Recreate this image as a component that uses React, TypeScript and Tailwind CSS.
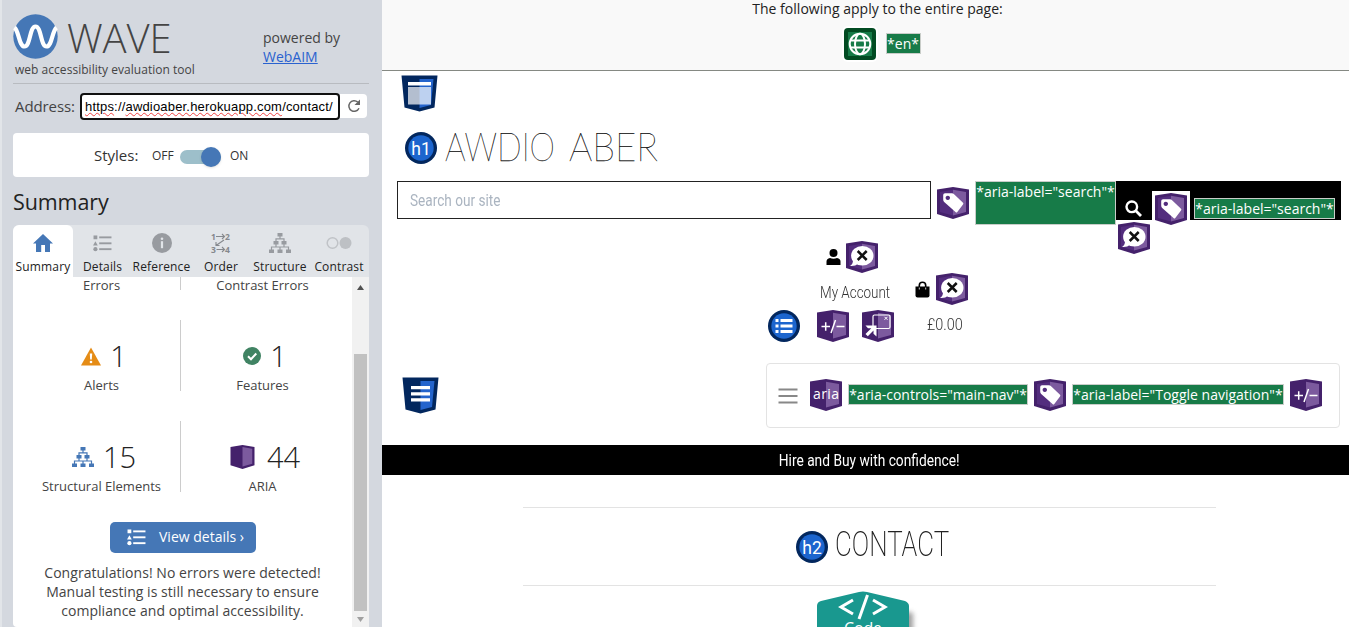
import React from "react";

const OPEN = "font-['Open_Sans','Noto_Sans',sans-serif]";
const NARROW = "font-['Roboto','Open_Sans',sans-serif]";

type IconProps = { className?: string };

function WaveLogo() {
  return (
    <svg className="h-[45px] w-[45px] shrink-0" viewBox="0 0 45 45">
      <circle cx="22.500" cy="22.500" r="22.200" fill="#4577b6" />
      <path d="M1.500 13.500 C6 17 6 32.500 11.500 32.500 C17.500 32.500 16.500 12.500 22.500 12.500 C28.500 12.500 27.500 32.500 33.500 32.500 C39 32.500 39 17 43.500 13.500" fill="none" stroke="#fff" strokeWidth="4.200" />
    </svg>
  );
}

function ListIcon({ className }: IconProps) {
  return (
    <svg className={className} viewBox="0 0 20 18" fill="currentColor">
      <rect x="0.500" y="0.500" width="4" height="4" />
      <path d="M2.500 6.500 L5 11 H0z" />
      <circle cx="2.500" cy="15" r="2.200" />
      <rect x="6.500" y="1.500" width="13" height="2" />
      <rect x="6.500" y="7.800" width="13" height="2" />
      <rect x="6.500" y="14" width="13" height="2" />
    </svg>
  );
}

function TreeIcon({ className }: IconProps) {
  return (
    <svg className={className} viewBox="0 0 22 20" fill="currentColor">
      <rect x="8.500" y="0" width="5" height="3.500" />
      <rect x="4.500" y="8" width="5" height="3.500" />
      <rect x="12.500" y="8" width="5" height="3.500" />
      <rect x="0" y="16.500" width="5" height="3.500" />
      <rect x="8.500" y="16.500" width="5" height="3.500" />
      <rect x="17" y="16.500" width="5" height="3.500" />
      <path d="M11 3v3M7 8V5.800h8V8M7 11v2.500M15 11v2.500M2.500 17v-3h17v3M11 14v3" fill="none" stroke="currentColor" strokeWidth="1.200" />
    </svg>
  );
}

function HomeIcon() {
  return (
    <svg className="h-[18px] w-[20px]" viewBox="0 0 20 18" fill="#4577b6">
      <path d="M10 0 L20 9.500 H17 V18 H12 V11 H8.200 V18 H3 V9.500 H0z" />
    </svg>
  );
}

function InfoIcon() {
  return (
    <svg className="h-[20px] w-[20px]" viewBox="0 0 20 20">
      <circle cx="10" cy="10" r="10" fill="#989ba0" />
      <circle cx="10" cy="5.700" r="1.300" fill="#e1e4e8" />
      <rect x="8.900" y="8.200" width="2.200" height="7" fill="#e1e4e8" />
    </svg>
  );
}

function OrderIcon() {
  return (
    <svg className="h-[22px] w-[20px] overflow-visible" viewBox="0 0 20 22" fill="#85888d" fontFamily="Open Sans" fontWeight="700" fontSize="8.500">
      <text x="0" y="7.500">1</text>
      <text x="14" y="7.500">2</text>
      <text x="0" y="20.500">3</text>
      <text x="14" y="20.500">4</text>
      <path d="M5 4.500h8.500M11 2L13.500 4.500 11 7M5.500 17.500h8M11 15l2.500 2.500-2.500 2.500M13 8L5 13.500M5 10V13.500h3.500" fill="none" stroke="#85888d" strokeWidth="1.100" />
    </svg>
  );
}

function ContrastIcon() {
  return (
    <svg className="h-[14px] w-[26px]" viewBox="0 0 26 14">
      <circle cx="6.500" cy="7" r="5.300" fill="none" stroke="#c0c3c7" strokeWidth="1.500" />
      <circle cx="19.500" cy="7" r="6" fill="#bdc0c4" />
    </svg>
  );
}

function AlertIcon() {
  return (
    <svg className="h-[19px] w-[20px]" viewBox="0 0 20 19">
      <path d="M10 0.500 L20 18.500 H0z" fill="#e58c16" />
      <path d="M8.800 6.500h2.400l-.4 6H9.200z" fill="#fff" />
      <circle cx="10" cy="15" r="1.300" fill="#fff" />
    </svg>
  );
}

function CheckIcon() {
  return (
    <svg className="h-[18px] w-[18px]" viewBox="0 0 18 18">
      <circle cx="9" cy="9" r="9" fill="#408363" />
      <path d="M5 9.200l3 3 5.300-5.700" fill="none" stroke="#fff" strokeWidth="2" />
    </svg>
  );
}

function Hex({ children, className = "h-8 w-8" }: { children?: React.ReactNode; className?: string }) {
  return (
    <svg className={`shrink-0 ${className}`} viewBox="0 0 32 32">
      <path d="M0 2.600 L16 0 L32 2.600 V27 L16 32 L0 27z" fill="#44216b" />
      <path d="M16 2.800 L29 5 V25 L16 28.600z" fill="#7c5a9e" />
      {children}
    </svg>
  );
}

function HexTag({ className }: IconProps) {
  return (
    <Hex className={className}>
      <path d="M3 5 L16 2.800 V28.600 L3 25z" fill="#532d7e" />
      <path fillRule="evenodd" fill="#fff" d="M8 6.200 H15 Q16 6.200 16.800 7 L26 15.800 Q26.800 16.600 26 17.500 L20.300 25 Q19.500 26 18.500 25 L7.200 15 Q6.200 14 6.200 12.500 V8 Q6.200 6.200 8 6.200z M10.800 8.700 a2.200 2.200 0 1 0 .01 0z" />
    </Hex>
  );
}

function HexHidden({ className }: IconProps) {
  return (
    <Hex className={className}>
      <path d="M3 5 L16 2.800 V28.600 L3 25z" fill="#532d7e" />
      <ellipse cx="16.300" cy="14.800" rx="11.200" ry="9.800" fill="#fff" />
      <path d="M7 18 Q7.500 23 4 25 Q9 25.500 12.500 22.500z" fill="#fff" />
      <path d="M11.700 10l9 9M20.700 10l-9 9" stroke="#111" strokeWidth="2.500" />
    </Hex>
  );
}

function HexPlus() {
  return (
    <Hex>
      <path d="M4.500 16.500h8.500M8.700 12.200v8.500M19.500 16.500h8M18.500 10L14 23" stroke="#fff" strokeWidth="1.500" fill="none" />
    </Hex>
  );
}

function HexPopup() {
  return (
    <Hex>
      <rect x="11" y="5" width="17" height="13.500" rx="1.500" fill="none" stroke="#fff" strokeWidth="1.200" />
      <path d="M22.500 6.800l3 3M25.500 6.800l-3 3" stroke="#fff" strokeWidth="1" />
      <path d="M3.500 15.500H14.500V26.500L11.500 23.800V20.500L5.800 26.200 L3.500 24 L9.300 18.300H6z" fill="#fff" />
    </Hex>
  );
}

function HexAria() {
  return (
    <Hex>
      <text x="3" y="20" fontFamily="Open Sans" fontSize="14" fill="#fff" textLength="26">aria</text>
    </Hex>
  );
}

function Shield({ kind }: { kind: "header" | "nav" }) {
  return (
    <svg className="h-[37px] w-[37px]" viewBox="0 0 37 37">
      <path d="M0.500 0.500 H36.500 L33.500 32.500 L18.500 36.500 L3.500 32.500z" fill="#02275e" />
      <path d="M18.500 4 H32.500 L30 30 L18.500 33z" fill="#2464cc" />
      {kind === "header" ? (
        <>
          <rect x="7" y="7" width="23" height="3.500" fill="#fff" />
          <rect x="7" y="12" width="23" height="17.500" fill="#fff" fillOpacity="0.700" />
        </>
      ) : (
        <path d="M9 9h19v3.300H9zM9 15.200h19v3.300H9zM9 21.300h19v3.300H9z" fill="#fff" />
      )}
    </svg>
  );
}

function Round({ label }: { label?: string }) {
  return (
    <svg className="h-8 w-8 shrink-0" viewBox="0 0 32 32">
      <circle cx="16" cy="16" r="16" fill="#02275e" />
      <circle cx="16" cy="16" r="12.700" fill="#1c65ce" />
      {label ? (
        <text x="16" y="22.500" textAnchor="middle" fontFamily="Roboto" fontSize="17.500" fill="#fff">{label}</text>
      ) : (
        <path d="M7.500 9h3v3h-3zM7.500 14.500h3v3h-3zM7.500 20h3v3h-3zM12.500 9h12v3h-12zM12.500 14.500h12v3h-12zM12.500 20h12v3h-12z" fill="#fff" />
      )}
    </svg>
  );
}

function GlobeIcon() {
  return (
    <svg className="h-8 w-8" viewBox="0 0 32 32">
      <rect width="32" height="32" rx="4" fill="#024b22" />
      <rect x="4" y="4" width="24" height="24" fill="#177b48" />
      <g fill="none" stroke="#fff" strokeWidth="2">
        <circle cx="16" cy="16" r="10.300" />
        <ellipse cx="16" cy="16" rx="5" ry="10.300" />
        <path d="M6.500 12.500h19M6.500 19.500h19" />
      </g>
    </svg>
  );
}

function Label({ text, className }: { text: string; className: string }) {
  return (
    <span className={`${OPEN} flex shrink-0 justify-center whitespace-nowrap border border-[#c9cdc9] bg-[#177b48] text-[14px] leading-[19px] text-white ${className}`}>
      {text}
    </span>
  );
}

function Tab({ label, icon, className, active }: { label: string; icon: React.ReactNode; className: string; active?: boolean }) {
  return (
    <div className={`flex flex-col items-center ${active ? "rounded-t-md bg-white" : ""} ${className}`}>
      <div className="mt-[6px] flex h-[24px] items-center">{icon}</div>
      <span className="mt-[3px] text-[12px] leading-[18px] tracking-[0.150px] text-[#222]">{label}</span>
    </div>
  );
}

function Stat({ icon, value, label, className }: { icon: React.ReactNode; value: string; label: string; className: string }) {
  return (
    <div className={`flex h-[71px] flex-col items-center ${className}`}>
      <div className="mt-[19px] ml-[5px] flex h-[34px] items-center gap-[9px]">
        {icon}
        <span className="text-[29px] font-light leading-[34px] text-[#222]">{value}</span>
      </div>
      <span className="mt-[3px] text-[13px] leading-[18px] text-[#444]">{label}</span>
    </div>
  );
}

function Sidebar() {
  return (
    <aside className={`${OPEN} flex h-[627px] w-[382px] shrink-0 flex-col border-l-2 border-[#e2e5e9] bg-[#d4d8df] pl-[11px] text-[#444]`}>
      <div className="flex h-[84px] w-[356px] border-b border-[#b8bbc0] pt-[14px]">
        <div className="flex w-[250px] flex-col">
          <div className="flex h-[48px]">
            <WaveLogo />
            <span className="ml-[9px] text-[40px] font-light leading-[48px] tracking-[-0.100px]">WAVE</span>
          </div>
          <span className="ml-[2px] text-[12px] leading-[16px] tracking-[0.030px]">web accessibility evaluation tool</span>
        </div>
        <div className="mt-[14px] text-[14px] leading-[19px]">
          powered by
          <br />
          <a className="text-[#2a62cf] underline" href="#">WebAIM</a>
        </div>
      </div>
      <div className="mt-[8px] flex h-[28px] items-center">
        <label className="ml-[2px] w-[65px] text-[15px] tracking-[-0.100px]">Address:</label>
        <div className="flex h-[27px] w-[260px] items-center rounded-[4px] border-2 border-[#101010] bg-white pl-[3px] font-['Liberation_Sans',sans-serif] text-[13px] text-black">
          <span className="mt-[2px] whitespace-nowrap leading-[16px] tracking-[0.180px]"><span className="underline decoration-[#e44] decoration-wavy decoration-[1px]">https</span>://<span className="underline decoration-[#e44] decoration-wavy decoration-[1px]">awdioaber.herokuapp.com</span>/contact/</span>
        </div>
        <div className="flex h-[24px] w-[27px] items-center justify-center rounded-r-[4px] bg-white">
          <svg className="h-[14px] w-[14px]" viewBox="0 0 14 14">
            <path d="M12 9.200A5.300 5.300 0 1 1 10.700 3" fill="none" stroke="#666" strokeWidth="1.500" />
            <path d="M13 0.500v5.500H7.500z" fill="#666" />
          </svg>
        </div>
      </div>
      <div className="mt-[13px] flex h-[44px] w-[356px] items-center rounded-[4px] bg-white pl-[81px] text-[#333]">
        <span className="mt-[1px] w-[58px] text-[15px]">Styles:</span>
        <span className="mt-[1px] w-[27px] text-[12px]">OFF</span>
        <div className="mt-[3px] ml-[1px] flex h-[14px] w-[41px] items-center justify-end rounded-full bg-[#9dbfca]">
          <span className="h-[20px] w-[20px] rounded-full bg-[#4577b6] shadow" />
        </div>
        <span className="mt-[1px] ml-[9px] text-[12px]">ON</span>
      </div>
      <h2 className="mt-[9px] h-[39px] text-[21.500px] leading-[32px] tracking-[-0.100px] text-[#222]">Summary</h2>
      <div className="flex h-[52px] w-[356px] rounded-t-[6px] bg-[#e1e4e8]">
        <Tab active label="Summary" className="w-[60px]" icon={<HomeIcon />} />
        <Tab label="Details" className="w-[59px]" icon={<ListIcon className="h-[17px] w-[19px] text-[#989ba0]" />} />
        <Tab label="Reference" className="w-[59px]" icon={<InfoIcon />} />
        <Tab label="Order" className="w-[60px]" icon={<OrderIcon />} />
        <Tab label="Structure" className="w-[58px]" icon={<TreeIcon className="h-[20px] w-[22px] text-[#989ba0]" />} />
        <Tab label="Contrast" className="w-[60px]" icon={<ContrastIcon />} />
      </div>
      <div className="flex h-[350px] w-[356px] overflow-hidden rounded-bl-[4px] bg-white">
        <div className="flex w-[339px] flex-col">
          <div className="flex h-[13px] text-[13px] leading-[16px]">
            <div className="w-[168px] border-r border-[#ccc] pl-[10px] text-center">Errors</div>
            <div className="w-[163px] text-center">Contrast Errors</div>
          </div>
          <div className="mt-[30px] flex">
            <Stat className="w-[168px] border-r border-[#ccc] pl-[10px]" icon={<AlertIcon />} value="1" label="Alerts" />
            <Stat className="w-[163px]" icon={<CheckIcon />} value="1" label="Features" />
          </div>
          <div className="mt-[30px] flex">
            <Stat className="w-[168px] border-r border-[#ccc] pl-[10px]" icon={<TreeIcon className="h-[20px] w-[22px] text-[#4577b6]" />} value="15" label="Structural Elements" />
            <Stat className="w-[163px]" icon={<Hex className="mr-[3px] h-[24px] w-[25px]" />} value="44" label="ARIA" />
          </div>
          <div className="mt-[30px] ml-[97px] flex h-[31px] w-[146px] items-center rounded-[5px] bg-[#4577b6] pl-[17px] text-[14px] text-white">
            <ListIcon className="h-[17px] w-[19px]" />
            <span className="-mt-[2px] ml-[13px] whitespace-nowrap">View details ›</span>
          </div>
          <p className="mt-[10px] text-center text-[14px] leading-[19.200px] tracking-[0.040px]">
            Congratulations! No errors were detected!
            <br />
            Manual testing is still necessary to ensure
            <br />
            compliance and optimal accessibility.
          </p>
        </div>
        <div className="flex w-[17px] flex-col items-center bg-[#f1f1f1]">
          <svg className="mt-[8px] h-[5px] w-[7px]" viewBox="0 0 7 5"><path d="M0 5L3.500 0 7 5z" fill="#505050" /></svg>
          <div className="mt-[64px] h-[257px] w-[13px] bg-[#c1c1c1]" />
          <svg className="mt-[6px] h-[5px] w-[7px]" viewBox="0 0 7 5"><path d="M0 0L3.500 5 7 0z" fill="#a0a0a0" /></svg>
        </div>
      </div>
    </aside>
  );
}

function PageInfo() {
  return (
    <div className={`${OPEN} flex h-[71px] flex-col items-center border-b border-[#858983] bg-[#f9f9f9] text-[#222]`}>
      <p className="ml-[24px] text-[14px] leading-[18px] tracking-[0.030px]">The following apply to the entire page:</p>
      <div className="mt-[8px] ml-[31px] flex h-[36px] items-center">
        <div className="rounded-[6px] border-2 border-white"><GlobeIcon /></div>
        <Label text="*en*" className="-mt-[2px] ml-[8px] h-[21px] w-[35px]" />
      </div>
    </div>
  );
}

export default function App() {
  return (
    <div className="flex h-[627px] w-[1349px] overflow-hidden bg-white">
      <Sidebar />
      <main className="flex w-[967px] flex-col">
        <PageInfo />
        <div className="mt-[4px] ml-[19px] h-[37px]"><Shield kind="header" /></div>
        <div className="mt-[14px] ml-[23px] flex h-[45px] items-center">
          <div className="-mt-[1px]"><Round label="h1" /></div>
          <svg className="ml-[8px] h-[46px] w-[220px] overflow-visible" viewBox="0 0 220 46">
            <text x="0" y="34.500" fontFamily="Lato, Roboto, sans-serif" fontWeight="100" fontSize="39" fill="#000" stroke="#000" strokeWidth="0.250" textLength="110" lengthAdjust="spacingAndGlyphs">AWDIO</text>
            <text x="124" y="34.500" fontFamily="Lato, Roboto, sans-serif" fontWeight="100" fontSize="39" fill="#000" stroke="#000" strokeWidth="0.250" textLength="89" lengthAdjust="spacingAndGlyphs">ABER</text>
          </svg>
        </div>
        <div className="mt-[10px] ml-[15px] flex h-[60px] items-start">
          <div className="flex h-[38px] w-[534px] items-center border border-[#222] pl-[12px]">
            <span className={`${NARROW} mt-[2px] inline-block origin-left scale-x-[0.850] text-[16px] text-[#aab4c0]`}>Search our site</span>
          </div>
          <div className="mt-[6px] ml-[6px] h-8"><HexTag /></div>
          <Label text={'*aria-label="search"*'} className="ml-[6px] h-[44px] w-[141px]" />
          <div className="flex h-[39px] w-[225px] items-start bg-black">
            <svg className="mt-[19px] ml-[9px] h-[17px] w-[17px] shrink-0" viewBox="0 0 17 17">
              <circle cx="6.800" cy="6.800" r="5.300" fill="none" stroke="#fff" strokeWidth="2.400" />
              <path d="M10.800 10.800L16 16" stroke="#fff" strokeWidth="2.800" />
            </svg>
            <div className="mt-[10px] ml-[10px] h-[34px] w-[38px] shrink-0 border-2 border-b-0 border-white bg-white pl-[1px]"><HexTag /></div>
            <Label text={'*aria-label="search"*'} className="mt-[17px] ml-[4px] h-[21px] w-[141px]" />
          </div>
        </div>
        <div className="-mt-[19px] ml-[736px] h-[32px]"><HexHidden /></div>
        <div className="-mt-[13px] ml-[386px] flex h-[103px]">
          <div className="flex w-[147px] flex-col">
            <div className="ml-[58px] flex h-[32px] items-center">
              <svg className="h-[16px] w-[15px]" viewBox="0 0 15 16"><circle cx="7.500" cy="4" r="4" /><path d="M0.500 16V12.500Q.5 9.500 4 9 Q7.500 10.500 11 9 Q14.500 9.500 14.500 12.500V16z" /></svg>
              <HexHidden className="ml-[5px] h-8 w-8" />
            </div>
            <span className={`${NARROW} mt-[9px] ml-[52px] w-[80px] origin-left scale-x-[0.840] whitespace-nowrap text-[16px] font-light leading-[22px] text-[#333]`}>My Account</span>
            <div className="mt-[6px] flex h-[32px]">
              <Round />
              <div className="ml-[17px]"><HexPlus /></div>
              <div className="ml-[13px]"><HexPopup /></div>
            </div>
          </div>
          <div className="mt-[32px] flex flex-col">
            <div className="flex h-[32px] items-center">
              <svg className="h-[17px] w-[15px]" viewBox="0 0 15 17"><path d="M0.500 5.500H14.500V14.500Q14.500 16.500 12.500 16.500H2.500Q.5 16.500 .5 14.500z" /><path d="M4.300 9V4.500a3.200 3.200 0 0 1 6.400 0V9" fill="none" stroke="#000" strokeWidth="1.600" /><path d="M4.300 6.500v2M10.700 6.500v2" stroke="#fff" strokeWidth=".8" /></svg>
              <HexHidden className="ml-[6px] h-8 w-8" />
            </div>
            <span className={`${NARROW} mt-[9px] ml-[12px] w-[40px] origin-left scale-x-[0.900] text-[16px] font-light leading-[22px] text-[#333]`}>£0.00</span>
          </div>
        </div>
        <div className="mt-[19px] ml-[20px] flex h-[65px]">
          <div className="mt-[14px] w-[364px]"><Shield kind="nav" /></div>
          <div className="flex w-[574px] items-center rounded-[4px] border border-[#e3e3e3] pl-[11px]">
            <svg className="h-[16px] w-[20px]" viewBox="0 0 20 16"><path d="M.5 1.500h19M.5 8h19M.5 14.500h19" stroke="#888" strokeWidth="1.800" /></svg>
            <div className="-mt-[1px] ml-[12px]"><HexAria /></div>
            <Label text={'*aria-controls="main-nav"*'} className="-mt-[3px] ml-[6px] h-[21px] w-[180px]" />
            <div className="-mt-[1px] ml-[6px]"><HexTag /></div>
            <Label text={'*aria-label="Toggle navigation"*'} className="-mt-[3px] ml-[6px] h-[21px] w-[212px]" />
            <div className="-mt-[1px] ml-[6px]"><HexPlus /></div>
          </div>
        </div>
        <div className="mt-[17px] flex h-[30px] items-center justify-center bg-black pl-[8px]">
          <span className={`${NARROW} mt-[2px] scale-x-[0.860] text-[16px] text-white`}>Hire and Buy with confidence!</span>
        </div>
        <div className="mt-[32px] ml-[141px] flex h-[79px] w-[693px] items-center border-y border-[#e3e3e3] pl-[273px]">
          <Round label="h2" />
          <span className={`${NARROW} -mt-[3px] ml-[7px] origin-left scale-x-[0.740] text-[35px] font-extralight text-[#222]`}>CONTACT</span>
        </div>
        <svg className="mt-[5px] ml-[433px] h-[36px] w-[105px] shrink-0 overflow-visible" viewBox="0 0 105 36">
          <defs><filter id="soft"><feGaussianBlur stdDeviation="2.500" /></filter></defs>
          <path d="M10 24L55 14L98 22V44H10z" fill="#777" opacity=".7" filter="url(#soft)" />
          <path d="M2 40V15Q2 11 6 10L44 1Q48 0 52 1L90 10Q94 12 94 15V40z" fill="#19988f" />
          <path d="M38 9L26 16L38 23M58 9L70 16L58 23M52.500 4L44 28" fill="none" stroke="#fff" strokeWidth="3" />
          <text x="48" y="42.500" textAnchor="middle" fontFamily="Open Sans" fontSize="16" fill="#fff" textLength="38">Code</text>
        </svg>
      </main>
    </div>
  );
}
